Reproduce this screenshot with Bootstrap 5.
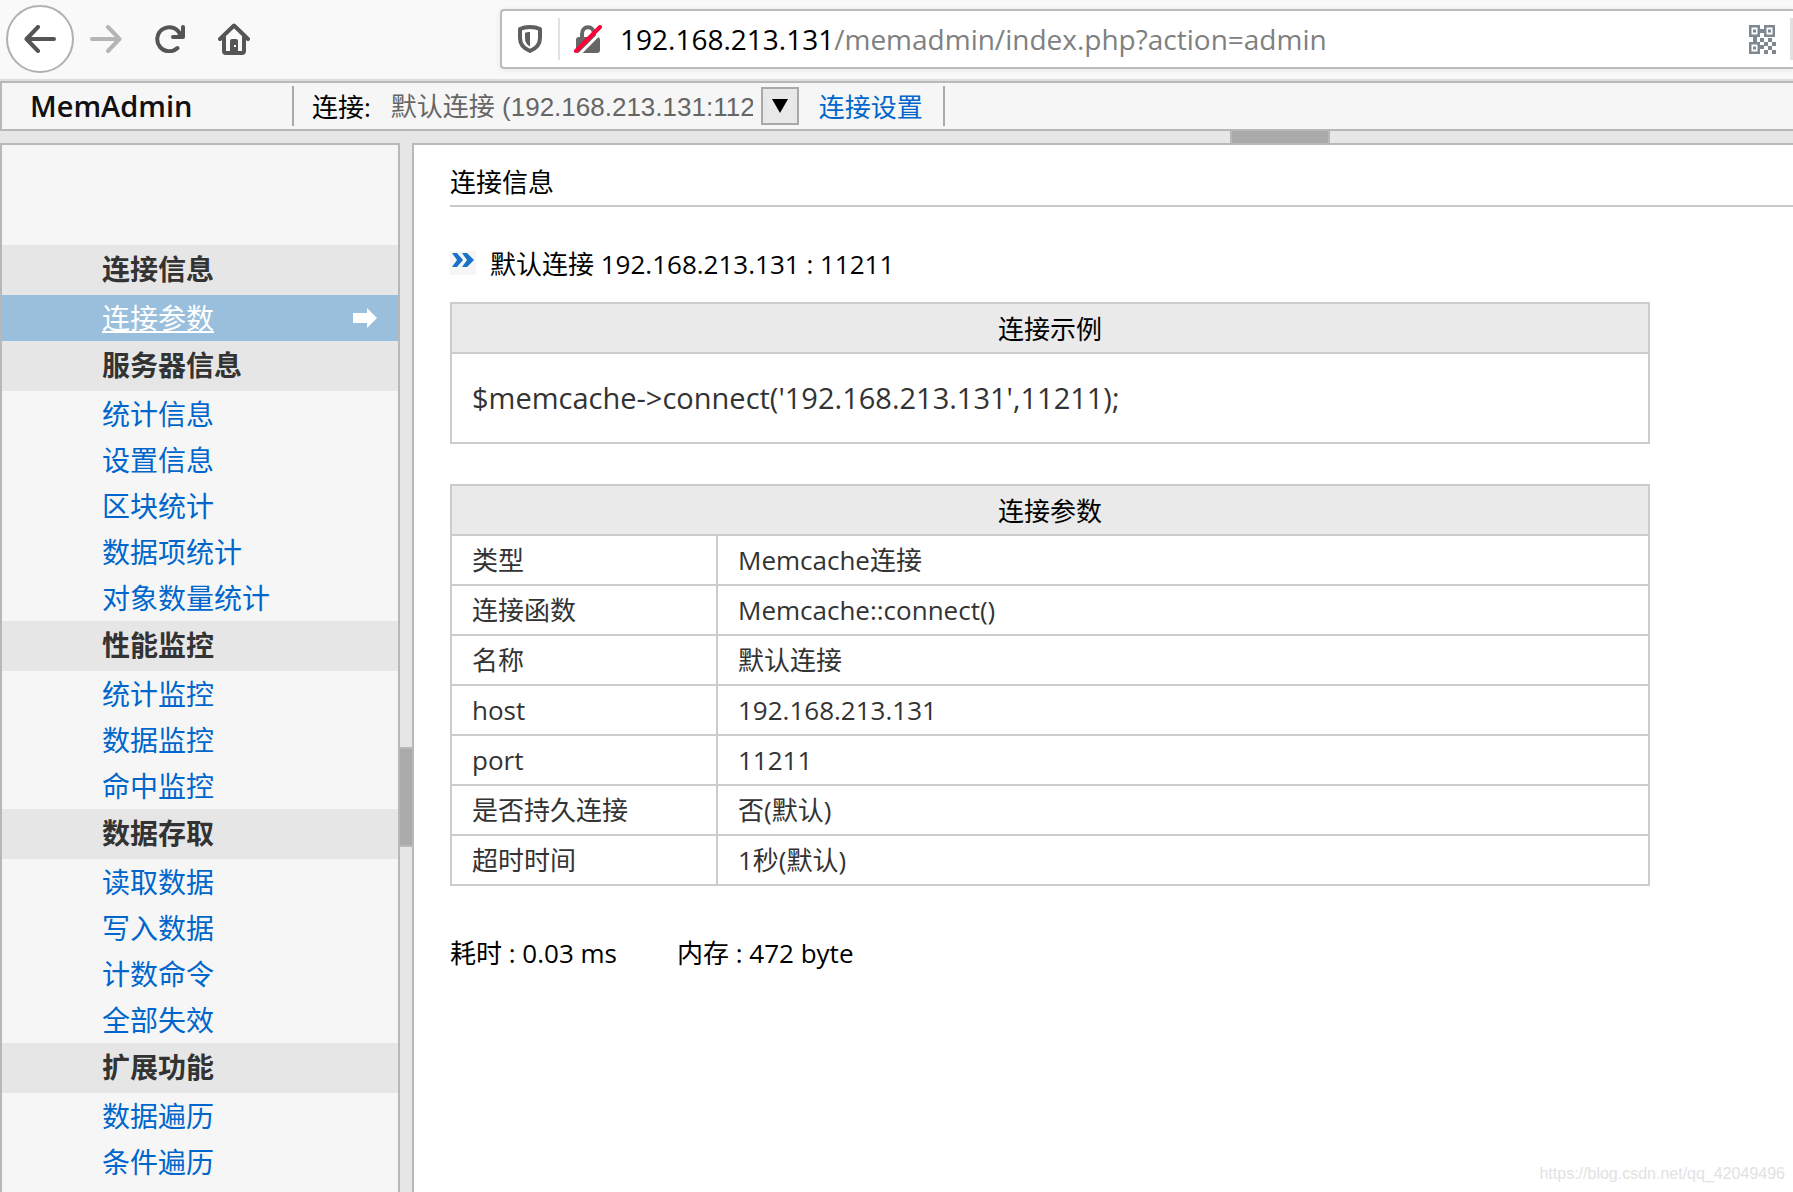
<!DOCTYPE html>
<html lang="zh-CN">
<head>
<meta charset="utf-8">
<meta name="viewport" content="width=device-width, initial-scale=1">
<title>MemAdmin</title>
<link rel="stylesheet" href="https://cdn.jsdelivr.net/npm/bootstrap@5.3.0/dist/css/bootstrap.min.css">
<script src="https://cdn.jsdelivr.net/npm/bootstrap@5.3.0/dist/js/bootstrap.bundle.min.js"></script>
<style>
  :root { --edge: #b8b8b8; --rule: #ccc; --pane: #f6f6f6; --gutter: #e6e6e6; --blue: #06c; }
  body { font: 26px/34px "Open Sans", "Noto Sans CJK SC", sans-serif; color: #000; background: var(--gutter); }
  a { color: var(--blue); text-decoration: none; }
  svg { display: block; flex: none; }

  .browser-bar { background: #f9f9fa; height: 81px; border-bottom: 2px solid #dedede; padding: 0 0 1px 6px; }
  .tool-btn { width: 64px; height: 68px; border: 0; padding: 0; background: none; display: flex; align-items: center; justify-content: center; }
  .tool-back { width: 68px; border: 2px solid #b0b0b0; border-radius: 50%; background: #fff; }
  .address { margin-left: 234px; height: 60px; border: 2px solid #bbb; border-right: 0; border-radius: 4px 0 0 4px; background: #fff; box-shadow: 0 1px 6px rgba(0,0,0,.08); padding-left: 16px; }
  .address-sep { width: 2px; height: 42px; background: #e1e1e2; margin: 0 14px 0 16px; }
  .address-sep:last-child { margin: 0 0 0 14px; width: 3px; }
  .address-text { font-size: 28px; color: #808080; margin-left: 18px; }

  .top-pane { height: 50px; border: 2px solid var(--edge); border-right: 0; background: var(--pane); }
  .brand { width: 290px; padding-left: 28px; font-size: 29px; font-weight: 600; color: #111; }
  .top-sep { width: 2px; height: 40px; background: #aaa; }
  .server-label { margin: 0 20px 0 18px; padding-top: 2px; }
  .server-select { width: 362px; height: 38px; padding: 2px 0 0; border: 0; background: none; appearance: none; color: #666; font: 26px/36px "Liberation Sans", "Noto Sans CJK SC", sans-serif; overflow: hidden; text-overflow: clip; }
  .server-link { padding: 2px 20px 0; }
  .drop-btn { width: 38px; height: 38px; padding: 0; border: 2px solid #a8a8a8; background: #e8e8e8; display: flex; align-items: center; justify-content: center; }

  .split-h { height: 12px; }
  .split-h span { width: 100px; margin-left: 1230px; background: #aaa; border: solid var(--edge); border-width: 0 2px; }
  .split-v { width: 12px; }
  .split-v span { height: 100px; margin-top: 604px; background: #aaa; border: solid var(--edge); border-width: 2px 0; }

  .side-pane { width: 400px; border: 2px solid var(--edge); border-bottom: 0; background: var(--pane); padding-top: 100px; font-size: 28px; }
  .side-pane h2 { margin: 0; padding: 0 0 2px 100px; font-size: 28px; font-weight: 700; line-height: 48px; color: #333; background: var(--gutter); }
  .side-pane a { height: 46px; padding: 0 20px 0 100px; line-height: 46px; }
  .side-pane a.current { background: #99bfdd; color: #fff; text-decoration: underline; text-decoration-thickness: 2px; text-underline-offset: 2px; }

  .main-pane { border: solid var(--edge); border-width: 2px 0 0 2px; background: #fff; padding: 20px 0 0 36px; }
  .main-pane h1 { margin: 0; font-size: 26px; line-height: 34px; font-weight: 400; padding-bottom: 6px; border-bottom: 2px solid #c9c9c9; height: 42px; }
  .conn-name { margin-top: 40px; height: 55px; }
  .conn-name svg { margin: 4px 14px 0 0; }
  .data-table { max-width: 1200px; margin: 0 0 40px; border-collapse: collapse; color: #333; }
  .data-table th, .data-table td { height: 50px; padding: 0 20px; border: 2px solid var(--rule); font-weight: 400; }
  .data-table thead th { background: #eaeaea; color: #000; text-align: center; padding-top: 2px; }
  .data-table tbody th { width: 266px; }
  .data-table .code-cell { height: 90px; font-size: 29px; }
  .stats { padding-top: 10px; gap: 60px; }
  .watermark { right: 8px; bottom: 8px; font: 16px/20px "Liberation Sans", sans-serif; color: #e2e2e2; }
</style>
</head>
<body class="vh-100 overflow-hidden d-flex flex-column">

<header class="browser-bar d-flex align-items-center flex-shrink-0">
  <button class="tool-btn tool-back" type="button" aria-label="后退">
    <svg width="32" height="28" viewBox="0 0 32 28" fill="none" stroke="#555" stroke-width="4" stroke-linecap="round" stroke-linejoin="round"><path d="M30 14H3M14 2 2.500 14 14 26"/></svg>
  </button>
  <button class="tool-btn" type="button" aria-label="前进">
    <svg width="32" height="28" viewBox="0 0 32 28" fill="none" stroke="#b5b5b6" stroke-width="4" stroke-linecap="round" stroke-linejoin="round"><path d="M2 14h27M18 2l11.500 12L18 26"/></svg>
  </button>
  <button class="tool-btn" type="button" aria-label="刷新">
    <svg width="30" height="28" viewBox="0 0 30 28" fill="none" stroke="#555" stroke-width="4" stroke-linecap="round" stroke-linejoin="round"><path d="M22.500 23A12 12 0 1 1 24.500 8"/><path d="M28 2v10H18"/><path d="M28 5v7h-7z" fill="#555" stroke-width="1"/></svg>
  </button>
  <button class="tool-btn" type="button" aria-label="主页">
    <svg width="32" height="32" viewBox="0 0 32 32" fill="none" stroke="#555" stroke-width="4" stroke-linecap="round" stroke-linejoin="round"><path d="M2 16 16 2.500 30 16"/><path d="M6 14v14q0 2 2 2h16q2 0 2-2V14"/><path d="M12 30V18q0-2 2-2h4q2 0 2 2v12z" fill="#555" stroke="none"/><path d="M16 22h2v2h-2z" fill="#fff" stroke="none"/></svg>
  </button>
  <div class="address d-flex align-items-center flex-grow-1">
    <svg width="24" height="28" viewBox="0 0 24 28"><path d="M12 2C9 2 5 2.500 2 4v9c0 7 4 10.500 10 13 6-2.500 10-6 10-13V4c-3-1.500-7-2-10-2z" fill="none" stroke="#5f5f60" stroke-width="4" stroke-linejoin="round"/><path d="M12 7c-2 0-3.500.2-5 .8V13c0 4 1.500 6.500 5 8.500z" fill="#5f5f60"/></svg>
    <span class="address-sep"></span>
    <svg width="28" height="28" viewBox="0 0 28 28"><path d="M8 14V9c0-9 12-9 12 0v5" fill="none" stroke="#666" stroke-width="4"/><rect x="2" y="12" width="24" height="16" rx="3" fill="#666"/><path d="M5 29.500 29.500 5" stroke="#fff" stroke-width="3"/><path d="M2 26 26 2" stroke="#ff0039" stroke-width="4" stroke-linecap="round"/></svg>
    <div class="address-text flex-grow-1"><span class="text-black">192.168.213.131</span>/memadmin/index.php?action=admin</div>
    <svg width="28" height="30" viewBox="0 0 28 30" fill="#7d8891"><path fill-rule="evenodd" d="M1 1h11v12H1zM3.500 3.500v7h6v-7zM16 1h11v12H16zM18.500 3.500v7h6v-7zM1 18h11v12H1zM3.500 20.500v7h6v-7z"/><path d="M5 5.500h3v3H5zM20 5.500h3v3h-3zM5 22.500h3v3H5zM12 5h4v4h-4zM5 13h4v5H5zM12 14h4v4h-4zM20 14h4v4h-4zM16 18h4v4h-4zM24 18h4v4h-4zM12 21h4v4h-4zM20 22h4v4h-4zM16 26h4v4h-4zM24 26h4v4h-4z"/></svg>
    <span class="address-sep"></span>
  </div>
</header>

<div class="top-pane d-flex align-items-center flex-shrink-0">
  <div class="brand">MemAdmin</div>
  <span class="top-sep"></span>
  <label for="server" class="server-label text-nowrap">连接:</label>
  <select id="server" class="server-select"><option>默认连接 (192.168.213.131:11211)</option></select>
  <button class="drop-btn ms-2" type="button" aria-label="展开">
    <svg width="18" height="16" viewBox="0 0 18 16"><path d="M1 1h16L9 15z"/></svg>
  </button>
  <a href="#" class="server-link text-nowrap">连接设置</a>
  <span class="top-sep"></span>
</div>
<div class="split-h d-flex flex-shrink-0"><span></span></div>

<div class="d-flex flex-grow-1 overflow-hidden">
  <nav class="side-pane flex-shrink-0 overflow-hidden">
    <h2>连接信息</h2>
    <a href="#" class="current d-flex align-items-center justify-content-between">连接参数
      <svg width="26" height="20" viewBox="0 0 26 20" fill="#fff"><path d="M1 5h14V0l10 10-10 10v-5H1z"/></svg></a>
    <h2>服务器信息</h2>
    <a href="#" class="d-block">统计信息</a>
    <a href="#" class="d-block">设置信息</a>
    <a href="#" class="d-block">区块统计</a>
    <a href="#" class="d-block">数据项统计</a>
    <a href="#" class="d-block">对象数量统计</a>
    <h2>性能监控</h2>
    <a href="#" class="d-block">统计监控</a>
    <a href="#" class="d-block">数据监控</a>
    <a href="#" class="d-block">命中监控</a>
    <h2>数据存取</h2>
    <a href="#" class="d-block">读取数据</a>
    <a href="#" class="d-block">写入数据</a>
    <a href="#" class="d-block">计数命令</a>
    <a href="#" class="d-block">全部失效</a>
    <h2>扩展功能</h2>
    <a href="#" class="d-block">数据遍历</a>
    <a href="#" class="d-block">条件遍历</a>
  </nav>
  <div class="split-v d-flex flex-column flex-shrink-0"><span></span></div>
  <main class="main-pane flex-grow-1 overflow-hidden">
    <h1>连接信息</h1>
    <div class="conn-name d-flex align-items-start">
      <svg width="26" height="24" viewBox="0 0 26 24"><path d="M0 0h26v24H0z" fill="#f5f5f5"/><path d="M2 2h5l6 7-6 7H2l5-7zM12 2h5l7 7-7 7h-5l5-7z" fill="#1a72c8"/></svg>
      <span>默认连接 192.168.213.131 : 11211</span>
    </div>
    <table class="data-table w-100">
      <thead><tr><th scope="col">连接示例</th></tr></thead>
      <tbody><tr><td class="code-cell">$memcache-&gt;connect('192.168.213.131',11211);</td></tr></tbody>
    </table>
    <table class="data-table w-100">
      <thead><tr><th colspan="2">连接参数</th></tr></thead>
      <tbody>
        <tr><th scope="row">类型</th><td>Memcache连接</td></tr>
        <tr><th scope="row">连接函数</th><td>Memcache::connect()</td></tr>
        <tr><th scope="row">名称</th><td>默认连接</td></tr>
        <tr><th scope="row">host</th><td>192.168.213.131</td></tr>
        <tr><th scope="row">port</th><td>11211</td></tr>
        <tr><th scope="row">是否持久连接</th><td>否(默认)</td></tr>
        <tr><th scope="row">超时时间</th><td>1秒(默认)</td></tr>
      </tbody>
    </table>
    <div class="stats d-flex"><span>耗时 : 0.03 ms</span><span>内存 : 472 byte</span></div>
  </main>
</div>
<div class="watermark position-absolute">https://blog.csdn.net/qq_42049496</div>
</body>
</html>
